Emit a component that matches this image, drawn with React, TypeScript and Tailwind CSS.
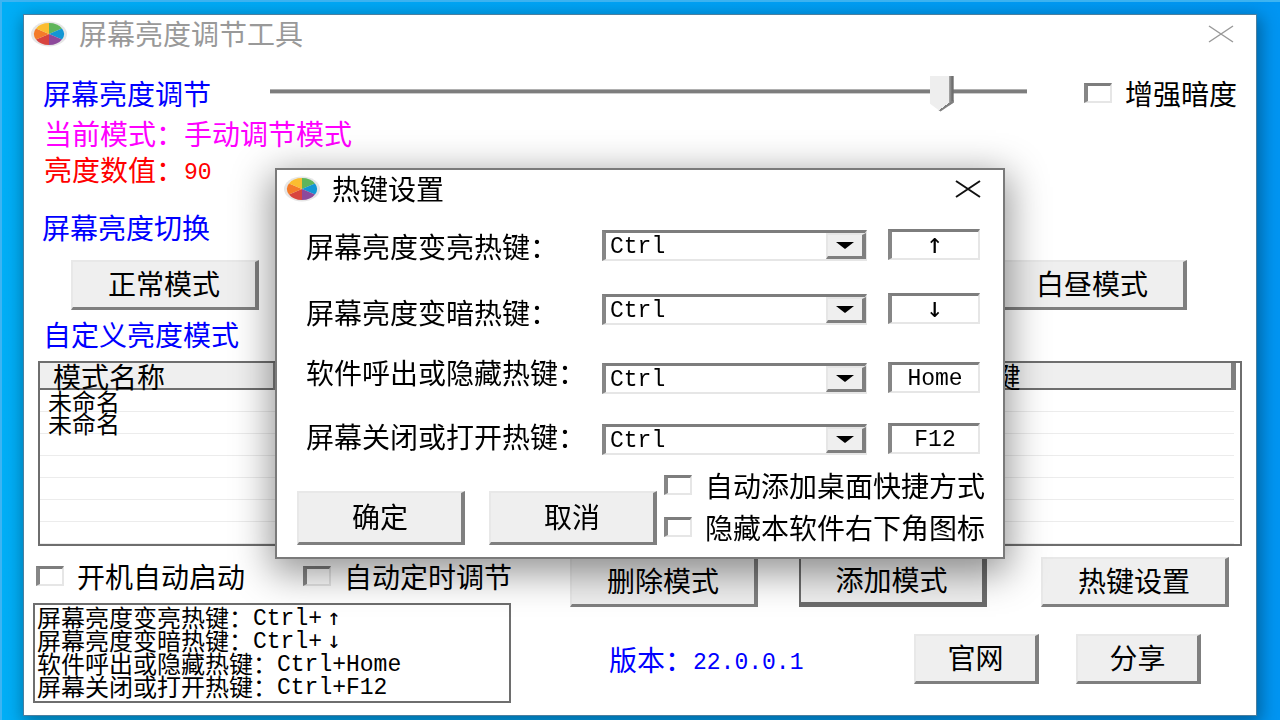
import { useState, type ReactNode } from "react";
import clsx from "clsx";

type Hotkey = {
  id: string;
  label: string;
  key: string;
  labelGap: string;
  fieldGap: string;
};

const HOTKEYS: Hotkey[] = [
  { id: "brighter", label: "屏幕亮度变亮热键：", key: "↑", labelGap: "", fieldGap: "" },
  { id: "darker", label: "屏幕亮度变暗热键：", key: "↓", labelGap: "mt-[30px]", fieldGap: "mt-[33px]" },
  { id: "toggle", label: "软件呼出或隐藏热键：", key: "Home", labelGap: "mt-6", fieldGap: "mt-[38px]" },
  { id: "screen", label: "屏幕关闭或打开热键：", key: "F12", labelGap: "mt-7", fieldGap: "mt-[30px]" },
];

const MODES = ["未命名", "未命名", "", "", "", "", ""];

const SUNKEN =
  "border-t-[3px] border-l-[4px] border-r-2 border-b-2 border-t-[#7d7d7d] border-l-[#868686] border-r-[#e6e6e6] border-b-[#e6e6e6]";

function isArrow(key: string) {
  return key === "↑" || key === "↓";
}

function Mono({ children }: { children: ReactNode }) {
  return (
    <span className="align-[2px] font-['Liberation_Mono','Noto_Sans_CJK_SC',monospace] text-[23px] leading-none">
      {children}
    </span>
  );
}

function PieIcon() {
  return (
    <svg className="h-[26px] w-[38px] shrink-0" viewBox="0 0 38 26" aria-hidden="true">
      <ellipse cx="19" cy="13" rx="18" ry="12.5" fill="#e6e6e6" />
      <g transform="translate(19 13) scale(15 11)">
        <path d="M0 0V-1A1 1 0 0 1 .866 -.5Z" fill="#5fb55a" />
        <path d="M0 0L.866 -.5A1 1 0 0 1 .866 .5Z" fill="#1296d4" />
        <path d="M0 0L.866 .5A1 1 0 0 1 0 1Z" fill="#8d499b" />
        <path d="M0 0V1A1 1 0 0 1 -.866 .5Z" fill="#d8443f" />
        <path d="M0 0L-.866 .5A1 1 0 0 1 -.866 -.5Z" fill="#f47b2a" />
        <path d="M0 0L-.866 -.5A1 1 0 0 1 0 -1Z" fill="#fbbd30" />
      </g>
    </svg>
  );
}

function TitleBar({ title, muted, onClose }: { title: string; muted?: boolean; onClose?: () => void }) {
  return (
    <header className="flex h-[38px] items-center pr-[22px] pl-[6px]">
      <PieIcon />
      <h1 className={clsx("ml-[11px] pb-[2px] leading-8", muted ? "text-[#999999]" : "text-black")}>{title}</h1>
      <button type="button" aria-label="关闭" onClick={onClose} className="ml-auto">
        <svg className="h-[18px] w-[26px]" viewBox="0 0 26 18" fill="none" aria-hidden="true">
          <path d="M1 1L25 17M25 1L1 17" stroke={muted ? "#999999" : "#111111"} strokeWidth={muted ? 1.5 : 2} />
        </svg>
      </button>
    </header>
  );
}

function PushButton({
  children,
  className,
  isDefault,
  onClick,
}: {
  children: ReactNode;
  className: string;
  isDefault?: boolean;
  onClick?: () => void;
}) {
  return (
    <button
      type="button"
      onClick={onClick}
      className={clsx(
        "shrink-0 bg-[#efefef] pb-1 leading-none",
        isDefault
          ? "border-t-2 border-r-[5px] border-b-[5px] border-l-2 border-[#6c6c6c]"
          : "border-t-2 border-r-4 border-b-[3px] border-l-2 border-t-[#e8e8e8] border-r-[#7f7f7f] border-b-[#7f7f7f] border-l-[#e8e8e8]",
        className
      )}
    >
      {children}
    </button>
  );
}

function CheckBox({ label }: { label: string }) {
  return (
    <label className="flex items-center gap-[13px] leading-9 whitespace-nowrap">
      <input
        type="checkbox"
        className={clsx("h-5 w-7 shrink-0 appearance-none bg-white checked:bg-[#7d7d7d]", SUNKEN)}
      />
      {label}
    </label>
  );
}

function HotkeyDialog({ onClose }: { onClose: () => void }) {
  return (
    <div className="fixed inset-0 flex items-center justify-center pt-[7px]">
      <section
        role="dialog"
        aria-label="热键设置"
        className="w-[730px] border-2 border-[#7a7a7a] bg-white pb-3 shadow-[0_10px_36px_4px_rgba(0,0,0,0.42)]"
      >
        <TitleBar title="热键设置" onClose={onClose} />

        <div className="mt-5 flex pr-[23px] pl-[29px]">
          <div className="flex flex-col">
            {HOTKEYS.map((h) => (
              <label key={h.id} htmlFor={h.id} className={clsx("leading-9 whitespace-nowrap", h.labelGap)}>
                {h.label}
              </label>
            ))}
          </div>

          <div className="ml-auto flex w-[265px] flex-col pt-[2px]">
            {HOTKEYS.map((h) => (
              <div key={h.id} className={clsx("relative h-[31px]", h.fieldGap)}>
                <select
                  id={h.id}
                  defaultValue="Ctrl"
                  className={clsx(
                    "block h-full w-full appearance-none bg-white pt-[2px] pl-1 font-['Liberation_Mono',monospace] text-[23px] leading-6",
                    SUNKEN
                  )}
                >
                  <option>Ctrl</option>
                </select>
                <span className="pointer-events-none absolute top-[3px] right-[1px] bottom-[2px] flex w-10 items-center justify-center border-t-2 border-r-4 border-b-[3px] border-l-2 border-t-[#e6e6e6] border-r-[#7f7f7f] border-b-[#7f7f7f] border-l-[#e6e6e6] bg-[#efefef]">
                  <svg className="h-[7px] w-[18px]" viewBox="0 0 18 7" aria-hidden="true">
                    <path d="M0 0H18L9 7Z" fill="#000000" />
                  </svg>
                </span>
              </div>
            ))}
          </div>

          <div className="ml-[21px] flex w-[92px] flex-col pt-[1px]">
            {HOTKEYS.map((h) => (
              <input
                key={h.id}
                type="text"
                readOnly
                aria-label={h.label + h.key}
                defaultValue={h.key}
                className={clsx(
                  "block h-[31px] w-full bg-white text-center leading-6",
                  isArrow(h.key)
                    ? "pb-1 font-['DejaVu_Sans_Mono',monospace] text-[28px]"
                    : "pt-[2px] font-['Liberation_Mono',monospace] text-[23px]",
                  SUNKEN,
                  h.fieldGap
                )}
              />
            ))}
          </div>
        </div>

        <div className="mt-3 flex pl-5">
          <div className="flex gap-6 pt-[24px]">
            <PushButton className="h-[54px] w-[168px]" onClick={onClose}>确定</PushButton>
            <PushButton className="h-[54px] w-[168px]" onClick={onClose}>取消</PushButton>
          </div>
          <div className="ml-[7px] flex flex-col gap-[6px]">
            <CheckBox label="自动添加桌面快捷方式" />
            <CheckBox label="隐藏本软件右下角图标" />
          </div>
        </div>
      </section>
    </div>
  );
}

export default function App() {
  const [brightness, setBrightness] = useState(90);
  const [showHotkeys, setShowHotkeys] = useState(true);

  return (
    <div className="flex min-h-screen flex-col border-t-2 border-l-2 border-[#3db4f2] bg-linear-to-r from-[#00aef6] to-[#0095f2] pt-3 pr-[23px] pb-1 pl-[21px] font-['Noto_Sans_CJK_SC',sans-serif] text-[28px] text-black">
      <main className="flex-1 border border-[#4b7f9f] bg-white shadow-[2px_5px_16px_2px_rgba(0,0,0,0.35)]">
        <TitleBar title="屏幕亮度调节工具" muted />

        <div className="mt-[22px] flex items-center pr-[19px] pl-[19px]">
          <label htmlFor="brightness" className="leading-9 whitespace-nowrap text-[#0000ff]">
            屏幕亮度调节
          </label>
          <input
            id="brightness"
            type="range"
            min={0}
            max={100}
            value={brightness}
            onChange={(e) => setBrightness(Number(e.target.value))}
            className="mr-[57px] ml-[59px] h-9 min-w-0 flex-1 appearance-none bg-transparent [&::-webkit-slider-runnable-track]:mb-1 [&::-webkit-slider-runnable-track]:h-[5px] [&::-webkit-slider-runnable-track]:border-t [&::-webkit-slider-runnable-track]:border-b [&::-webkit-slider-runnable-track]:border-t-[#b0b0b0] [&::-webkit-slider-runnable-track]:border-b-[#cccccc] [&::-webkit-slider-runnable-track]:bg-[#7d7d7d] [&::-webkit-slider-thumb]:-mt-[14px] [&::-webkit-slider-thumb]:h-9 [&::-webkit-slider-thumb]:w-6 [&::-webkit-slider-thumb]:appearance-none [&::-webkit-slider-thumb]:bg-[linear-gradient(145deg,transparent_33px,#808080_33px),linear-gradient(to_right,#eeeeee_19px,#a8a8a8_19px,#6f6f6f_22px)] [&::-webkit-slider-thumb]:[clip-path:polygon(0_0,100%_0,100%_75%,45%_100%,0_78%)]"
          />
          <CheckBox label="增强暗度" />
        </div>

        <div className="mt-1 pl-[20px] leading-9">
          <p className="text-[#ff00ff]">当前模式：手动调节模式</p>
          <p className="text-[#ff0000]">
            亮度数值：<Mono>{brightness}</Mono>
          </p>
        </div>

        <h2 className="mt-[22px] pl-[18px] leading-9 text-[#0000ff]">屏幕亮度切换</h2>
        <div className="mt-[15px] flex justify-between pr-[69px] pl-[47px]">
          <PushButton className="h-[50px] w-[188px]">正常模式</PushButton>
          <PushButton className="h-[50px] w-[188px]">白昼模式</PushButton>
        </div>

        <h2 className="mt-[6px] pl-[19px] leading-9 text-[#0000ff]">自定义亮度模式</h2>
        <div className="mt-[9px] mr-[14px] ml-[14px] border-2 border-[#6e6e6e] pr-1">
          <table className="w-full table-fixed border-collapse text-left">
            <thead>
              <tr className="h-[26px] border-b-2 border-[#6e6e6e] bg-[#efefef]">
                <th className="w-[235px] border-r-4 border-[#7f7f7f] pl-[13px] font-normal">
                  <div className="h-6 leading-6">模式名称</div>
                </th>
                <th className="border-r-4 border-[#7f7f7f]" />
                <th className="w-[284px] border-r-[5px] border-[#7f7f7f] pl-[13px] font-normal">
                  <div className="h-6 leading-6">热键</div>
                </th>
              </tr>
            </thead>
            <tbody className="text-2xl">
              {MODES.map((name, i) => (
                <tr key={i} className="h-[22px] border-b border-[#ececec]">
                  <td className="pl-2">
                    <div className="h-[21px] leading-[21px]">{name}</div>
                  </td>
                  <td />
                  <td />
                </tr>
              ))}
            </tbody>
          </table>
        </div>

        <div className="flex pl-[9px]">
          <div className="w-[478px] shrink-0 pt-3">
            <div className="flex gap-[58px] pl-[3px]">
              <CheckBox label="开机自动启动" />
              <CheckBox label="自动定时调节" />
            </div>
            <ul className="mt-[9px] h-[100px] border-2 border-[#6e6e6e] pl-[2px] text-2xl leading-[23px]">
              {HOTKEYS.map((h) => (
                <li key={h.id} className="h-[23px] whitespace-nowrap">
                  {h.label}
                  <Mono>
                    Ctrl+
                    {isArrow(h.key) ? (
                      <span className="px-[5px] font-['DejaVu_Sans_Mono',monospace]">{h.key}</span>
                    ) : (
                      h.key
                    )}
                  </Mono>
                </li>
              ))}
            </ul>
          </div>

          <div className="ml-[59px] flex-1 pt-[11px] pr-[27px]">
            <div className="flex">
              <PushButton className="h-[50px] w-[188px]">删除模式</PushButton>
              <PushButton className="ml-[41px] h-[50px] w-[188px]" isDefault>添加模式</PushButton>
              <PushButton className="ml-auto h-[50px] w-[188px]" onClick={() => setShowHotkeys(true)}>
                热键设置
              </PushButton>
            </div>
            <div className="mt-[27px] flex items-center gap-[37px] pr-7 pl-[39px]">
              <p className="mr-auto leading-9 text-[#0000ff]">
                版本：<Mono>22.0.0.1</Mono>
              </p>
              <PushButton className="h-[50px] w-[125px]">官网</PushButton>
              <PushButton className="h-[50px] w-[125px]">分享</PushButton>
            </div>
          </div>
        </div>
      </main>

      {showHotkeys && <HotkeyDialog onClose={() => setShowHotkeys(false)} />}
    </div>
  );
}
